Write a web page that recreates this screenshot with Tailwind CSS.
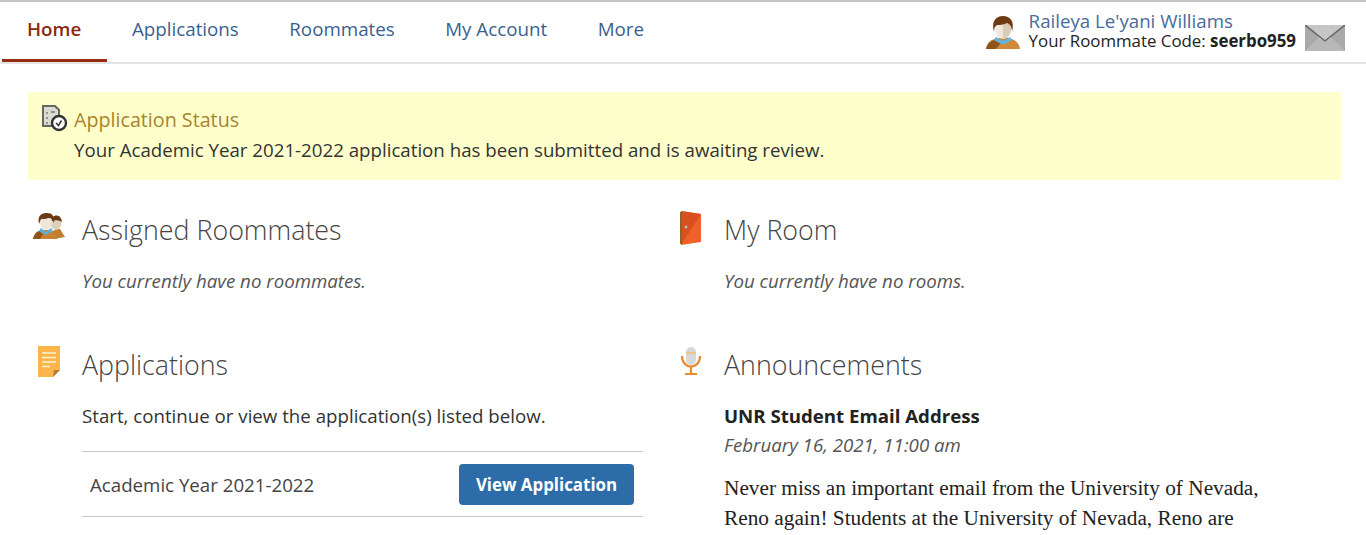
<!DOCTYPE html>
<html lang="en">
<head>
  <meta charset="UTF-8">
  <title>Housing Portal Home</title>
  <script src="https://cdn.jsdelivr.net/npm/@tailwindcss/browser@4"></script>
</head>
<body class="bg-white h-[535px] overflow-hidden font-['Open_Sans',sans-serif] text-[#333]">
  <!-- Top nav -->
  <div class="h-[64px] border-t-2 border-[#c4c4c4] border-b-2 border-b-[#e4e4e4] flex justify-between">
    <div class="flex pl-[2px] text-[18.75px] text-[#3a5f8f]">
      <a class="w-[105px] h-[60px] pl-[25px] pt-[13px] font-semibold text-[#8a2a10] border-b-[3px] border-[#962d0e]">Home</a>
      <a class="pl-[25px] pr-[25.500px] pt-[13px]">Applications</a>
      <a class="pl-[25px] pr-[25.500px] pt-[13px]">Roommates</a>
      <a class="pl-[25px] pr-[25.500px] pt-[13px]">My Account</a>
      <a class="pl-[25px] pr-[26px] pt-[13px]">More</a>
    </div>
    <div class="flex pr-[21px]">
      <!-- user icon -->
      <svg class="w-[36px] h-[36px] mt-[13px] mr-[8px]" viewBox="0 0 36 36">
        <path d="M1 34c1-7 6-10 12-11h10c6 1 11 4 12 11z" fill="#cf8a3c"/>
        <path d="M1 34c1-5 4-8 8-9l7 3-5 6z" fill="#8f5518"/>
        <path d="M11 22l7 4 7-4 2 3-7 4h-4l-7-4z" fill="#62b4e0"/>
        <ellipse cx="18" cy="14" rx="8" ry="10" fill="#f0e8da"/>
        <path d="M18 4c5 0 8 4 8 10s-4 10-8 10z" fill="#d9cdb9"/>
        <path d="M9 17C6 6 11 1 18 1s12 5 9 16c0-5-2-8-5-9-4 2-8 2-10 2-2 1-3 3-3 7z" fill="#6e3c14"/>
      </svg>
      <div class="pt-[9px] leading-[20px]">
        <div class="text-[18.7px] text-[#4a6a9a]">Raileya Le'yani Williams</div>
        <div class="text-[16.85px] text-[#222] whitespace-nowrap">Your Roommate Code: <b>seerbo959</b></div>
      </div>
      <!-- envelope -->
      <svg class="w-[40px] h-[26px] mt-[23px] ml-[9px]" viewBox="0 0 40 26">
        <rect width="40" height="26" fill="#a9a9a9"/>
        <path d="M0 0h40L20 16z" fill="#c6c6c6"/>
        <path d="M0 0l20 16L40 0" fill="none" stroke="#666" stroke-width="1.500"/>
        <path d="M0 26l14-14 6 5 6-5 14 14z" fill="#b8b8b8"/>
      </svg>
    </div>
  </div>

  <!-- Status banner -->
  <div class="ml-[28px] mr-[25px] mt-[28px] h-[88px] bg-[#ffffcc] pl-[13px] pt-[14px] flex">
    <svg class="w-[28px] h-[28px] mr-[5px] -mt-[2px]" viewBox="0 0 28 28">
      <path d="M2 2h12l4 4v16H2z" fill="#dcdcd2" stroke="#666" stroke-width="2"/>
      <path d="M6 8v2M6 13v2M6 18v2M10 8h4" stroke="#777" stroke-width="1.500"/>
      <circle cx="18" cy="19" r="7" fill="#fff" stroke="#333" stroke-width="2.400"/>
      <path d="M15 19l2.500 2.500 3-5" fill="none" stroke="#333" stroke-width="1.500"/>
    </svg>
    <div>
      <div class="text-[19.7px] leading-[28px] text-[#a8842c]">Application Status</div>
      <div class="text-[18.7px] leading-[32px] text-[#333]">Your Academic Year 2021-2022 application has been submitted and is awaiting review.</div>
    </div>
  </div>

  <!-- Two columns -->
  <div class="grid grid-cols-[643px_1fr] pt-[32px]">
    <div class="pl-[33px]">
      <div class="flex h-[135px]">
        <svg class="w-[34px] h-[30px] mr-[15px] shrink-0" viewBox="0 0 34 30">
          <path d="M18 20l6-3h3l5 8-11 2z" fill="#c08030"/>
          <ellipse cx="23" cy="11" rx="5.500" ry="7" fill="#ddd0bc"/>
          <path d="M18 9c1-7 10-8 11 1-3-2-7-2-11-1z" fill="#6a3a14"/>
          <path d="M0 27c1-6 5-8 9-9h6c4 1 8 3 9 9z" fill="#c98232"/>
          <path d="M0 27c1-4 3-7 6-8l4 3-3 5z" fill="#8f5518"/>
          <path d="M8 16l5 4 5-4 2 3-7 4-7-4z" fill="#5bb0dc"/>
          <ellipse cx="13" cy="10" rx="6" ry="8" fill="#efe6d8"/>
          <path d="M6 12C4 3 9 1 14 1s8 3 7 10c-1-3-3-5-5-5-3 1-6 1-8 1z" fill="#6a3a14"/>
        </svg>
        <div>
          <h2 class="text-[26.8px] leading-[36px] font-light text-[#444]">Assigned Roommates</h2>
          <p class="italic text-[18.7px] text-[#555] mt-[21px] leading-[24px]">You currently have no roommates.</p>
        </div>
      </div>
      <div class="flex">
        <svg class="w-[22px] h-[32px] ml-[5px] mr-[22px] -mt-[1px] shrink-0" viewBox="0 0 22 32">
          <path d="M0 0h22v24l-7 7H0z" fill="#fbb54a"/>
          <path d="M4 7h14M4 11.500h14M4 16h14M4 20.500h8" stroke="#fff3d6" stroke-width="1.600"/>
          <path d="M15 31l1-7h6z" fill="#b87a30"/>
        </svg>
        <div class="w-[561px]">
          <h2 class="text-[26.8px] leading-[36px] font-light text-[#444]">Applications</h2>
          <p class="text-[18.7px] leading-[24px] mt-[21px] text-[#333]">Start, continue or view the application(s) listed below.</p>
          <div class="mt-[23px] h-[66px] border-y-[1.5px] border-[#c8c8c8] flex items-center justify-between pl-[8px] pr-[9px]">
            <span class="text-[18.7px] text-[#444] mt-[3px]">Academic Year 2021-2022</span>
            <button class="w-[175px] h-[41px] pt-[1px] rounded-[4px] bg-[#2c6ca8] text-white font-bold text-[16.9px]">View Application</button>
          </div>
        </div>
      </div>
    </div>

    <div class="pl-[37px]">
      <div class="flex h-[135px]">
        <svg class="w-[22px] h-[36px] mr-[22px] -mt-[3px] shrink-0" viewBox="0 0 22 36">
          <path d="M1 2l20 3v28L1 36z" fill="#f0622a"/>
          <path d="M21 5L1 36V2z" fill="#d9501f"/>
          <path d="M0 3h2v32H0z" fill="#8a6a20"/>
          <circle cx="6" cy="18" r="1.500" fill="#bbb"/>
        </svg>
        <div>
          <h2 class="text-[26.8px] leading-[36px] font-light text-[#444]">My Room</h2>
          <p class="italic text-[18.7px] text-[#555] mt-[21px] leading-[24px]">You currently have no rooms.</p>
        </div>
      </div>
      <div class="flex">
        <svg class="w-[22px] h-[30px] mr-[22px] -mt-[1px] shrink-0" viewBox="0 0 22 30">
          <rect x="6" y="1" width="10" height="18" rx="5" fill="#d8d8d8"/>
          <path d="M6 7h10" stroke="#f0c070" stroke-width="1.500"/>
          <path d="M2 10c0 14 18 14 18 0" fill="none" stroke="#e98b2e" stroke-width="2.200"/>
          <path d="M11 21v6M5 28h12" stroke="#e98b2e" stroke-width="2.200"/>
        </svg>
        <div>
          <h2 class="text-[26.8px] leading-[36px] font-light text-[#444]">Announcements</h2>
          <h3 class="font-bold text-[18.65px] text-[#222] leading-[24px] mt-[21px]">UNR Student Email Address</h3>
          <p class="italic text-[18.7px] text-[#555] leading-[24px] mt-[5px]">February 16, 2021, 11:00 am</p>
          <p class="font-['Liberation_Serif',serif] text-[21.3px] leading-[30px] text-[#222] mt-[16px] w-[560px]">Never miss an important email from the University of Nevada, Reno again! Students at the University of Nevada, Reno are</p>
        </div>
      </div>
    </div>
  </div>
</body>
</html>
